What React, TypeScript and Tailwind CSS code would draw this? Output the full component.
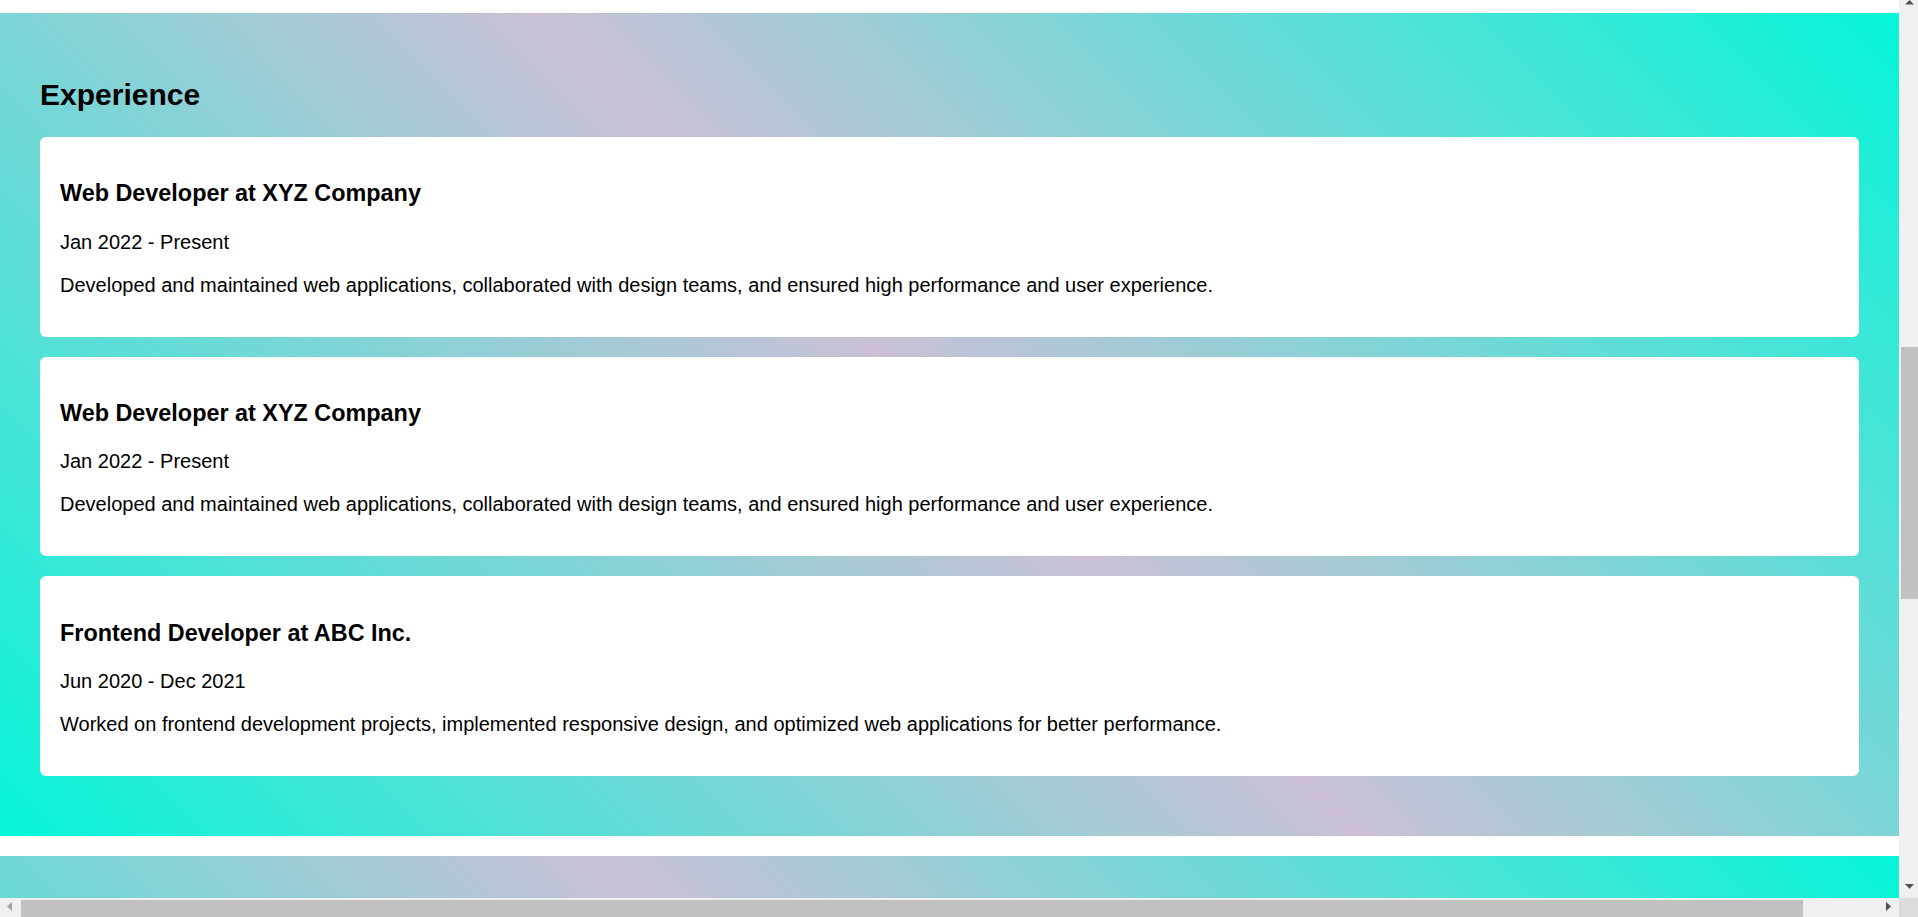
import React from "react";

type Job = { title: string; date: string; desc: string };

const jobs: Job[] = [
  {
    title: "Web Developer at XYZ Company",
    date: "Jan 2022 - Present",
    desc: "Developed and maintained web applications, collaborated with design teams, and ensured high performance and user experience.",
  },
  {
    title: "Web Developer at XYZ Company",
    date: "Jan 2022 - Present",
    desc: "Developed and maintained web applications, collaborated with design teams, and ensured high performance and user experience.",
  },
  {
    title: "Frontend Developer at ABC Inc.",
    date: "Jun 2020 - Dec 2021",
    desc: "Worked on frontend development projects, implemented responsive design, and optimized web applications for better performance.",
  },
];

function Card({ job }: { job: Job }) {
  return (
    <div className="bg-white rounded-[6px] p-[20px] mb-[20px]">
      <h3 className="text-[23.4px] font-bold leading-[normal] my-[23.4px] text-black">{job.title}</h3>
      <p className="text-[20px] leading-[normal] my-[20px] text-black">{job.date}</p>
      <p className="text-[20px] leading-[normal] my-[20px] text-black">{job.desc}</p>
    </div>
  );
}

export default function App() {
  return (
    <div className="w-[1918px] h-[917px] flex flex-col overflow-hidden bg-white font-['Liberation_Sans',Arial,sans-serif] text-black">
      <div className="flex flex-1 min-h-0">
        <main className="w-[1899px] overflow-hidden flex flex-col">
          <div className="h-[13px] shrink-0" />
          <section className="shrink-0 p-[40px] bg-[linear-gradient(45deg,#05f5d8,#cbc0d6,#05f5d8)]">
            <h2 className="text-[30px] font-bold leading-[normal] my-[24.9px]">Experience</h2>
            {jobs.map((j, i) => (
              <Card key={i} job={j} />
            ))}
          </section>
          <section className="shrink-0 mt-[20px] h-[700px] bg-[linear-gradient(45deg,#05f5d8,#cbc0d6,#05f5d8)]" />
        </main>
        <div className="w-[19px] shrink-0 bg-[#f0f0f0] flex flex-col">
          <div className="h-[17px] relative">
            <svg width="19" height="17" className="absolute left-0 top-0">
              <polygon points="6,4.5 15,4.5 10.5,0" fill="#505050" />
            </svg>
          </div>
          <div className="flex-1 flex flex-col pl-[2px]">
            <div className="h-[330px]" />
            <div className="h-[252px] bg-[#c1c1c1]" />
          </div>
          <div className="h-[17px] relative">
            <svg width="19" height="17" className="absolute left-0 top-0">
              <polygon points="6,3 15,3 10.5,7.7" fill="#505050" />
            </svg>
          </div>
        </div>
      </div>
      <div className="h-[19px] shrink-0 flex bg-[#f0f0f0]">
        <div className="w-[1899px] flex pt-[2px]">
          <div className="w-[21px] h-full relative">
            <svg width="21" height="17" className="absolute left-0 top-0">
              <polygon points="12,2 12,11 7,6.5" fill="#a3a3a3" />
            </svg>
          </div>
          <div className="w-[1782px] h-full bg-[#c1c1c1]" />
          <div className="flex-1 relative">
            <svg width="96" height="17" className="absolute left-0 top-0">
              <polygon points="83,2 83,11 88,6.5" fill="#505050" />
            </svg>
          </div>
        </div>
        <div className="w-[19px] h-full bg-[#dcdcdc]" />
      </div>
    </div>
  );
}
